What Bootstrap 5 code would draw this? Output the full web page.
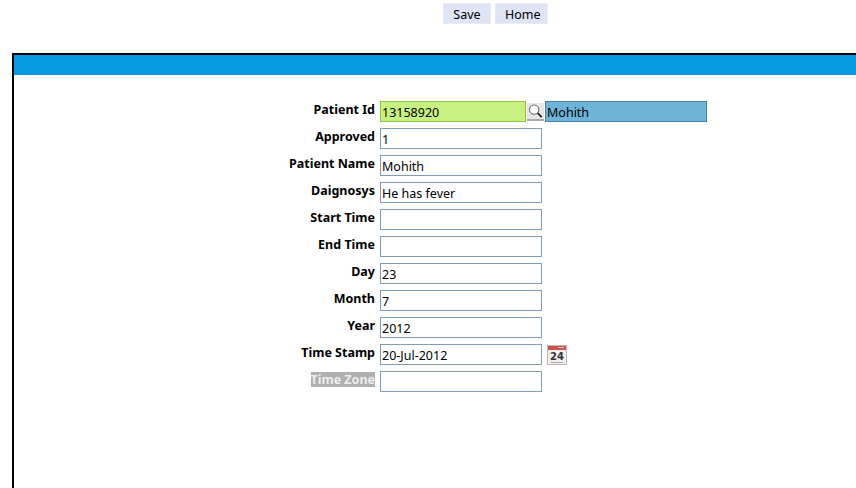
<!DOCTYPE html>
<html lang="en">

<head>
    <meta charset="UTF-8">
    <meta name="viewport" content="width=device-width, initial-scale=1">
    <title>Patient</title>
    <link href="https://cdn.jsdelivr.net/npm/bootstrap@5.3.0/dist/css/bootstrap.min.css" rel="stylesheet">
    <style>
        html, body { height: 100%; overflow: hidden; }
        body { background: #fff; color: #000; font-family: "Noto Sans", "DejaVu Sans", sans-serif; font-size: 12.5px; }
        .top-bar { height: 53px; padding: 3px 0 0 443px; gap: 4px; flex: none; }
        .top-btn { height: 21px; padding: 0 9px; background: #dfe5f5; border: 1px solid #e8ecf8; border-radius: 0; color: #000; font-size: 12.5px; line-height: 21px; }
        .save-btn { width: 48px; }
        .home-btn { width: 53px; }
        .top-btn:hover { background: #dfe5f5; }
        .main-panel { flex: 1 1 auto; margin-left: 12px; border-style: solid; border-color: #000; border-width: 2px 0 0 2px; }
        .blue-strip { height: 20px; background: #0a9ae2; }
        .form-area { padding: 26px 0 0 0; gap: 6px; }
        .form-line { height: 21px; }
        .field-label { width: 366px; padding-right: 5px; padding-bottom: 4px; text-align: right; font-weight: 700; font-size: 12.5px; line-height: 15px; white-space: nowrap; }
        .field-label span { display: inline-block; }
        .faded { background: #b0b0b0; color: #eee; }
        .field-input { width: 162px; height: 21px; padding: 1px 1px 0; border: 1px solid #7f9db9; border-radius: 0; background: #fff; color: #000; font-family: inherit; font-size: 12.5px; line-height: 16px; outline: 0; }
        .id-input { width: 146px; background: #c8f081; border-color: #8ec63f; }
        .name-input { background: #6eb4d8; border-color: #4a80a0; }
        .glass { width: 17px; height: 18px; margin: 0 1px; background: #e6e6e6; border-bottom: 2px solid #aaa; }
        .cal { margin-left: 5px; }
        .cal-day { font-family: "DejaVu Sans", sans-serif; font-size: 10px; font-weight: 700; fill: #333; }
    </style>
</head>

<body class="d-flex flex-column">

    <div class="top-bar d-flex align-items-start">
        <button type="button" class="btn top-btn save-btn">Save</button>
        <button type="button" class="btn top-btn home-btn">Home</button>
    </div>

    <div class="main-panel">
        <div class="blue-strip"></div>
        <form class="form-area d-flex flex-column">

            <div class="form-line d-flex align-items-center">
                <label class="field-label" for="patientId">Patient Id</label>
                <input type="text" id="patientId" class="field-input id-input" value="13158920">
                <svg class="glass" viewBox="0 0 17 18" aria-hidden="true">
                    <circle cx="7" cy="7.5" r="5.2" fill="#fff" stroke="#666" stroke-width="1.2"/>
                    <path d="M11 11.5 L15.5 16" stroke="#222" stroke-width="2"/>
                </svg>
                <input type="text" class="field-input name-input" value="Mohith">
            </div>

            <div class="form-line d-flex align-items-center">
                <label class="field-label" for="approved">Approved</label>
                <input type="text" id="approved" class="field-input" value="1">
            </div>

            <div class="form-line d-flex align-items-center">
                <label class="field-label" for="patientName">Patient Name</label>
                <input type="text" id="patientName" class="field-input" value="Mohith">
            </div>

            <div class="form-line d-flex align-items-center">
                <label class="field-label" for="diagnosis">Daignosys</label>
                <input type="text" id="diagnosis" class="field-input" value="He has fever">
            </div>

            <div class="form-line d-flex align-items-center">
                <label class="field-label" for="startTime">Start Time</label>
                <input type="text" id="startTime" class="field-input">
            </div>

            <div class="form-line d-flex align-items-center">
                <label class="field-label" for="endTime">End Time</label>
                <input type="text" id="endTime" class="field-input">
            </div>

            <div class="form-line d-flex align-items-center">
                <label class="field-label" for="day">Day</label>
                <input type="text" id="day" class="field-input" value="23">
            </div>

            <div class="form-line d-flex align-items-center">
                <label class="field-label" for="month">Month</label>
                <input type="text" id="month" class="field-input" value="7">
            </div>

            <div class="form-line d-flex align-items-center">
                <label class="field-label" for="year">Year</label>
                <input type="text" id="year" class="field-input" value="2012">
            </div>

            <div class="form-line d-flex align-items-center">
                <label class="field-label" for="timeStamp">Time Stamp</label>
                <input type="text" id="timeStamp" class="field-input" value="20-Jul-2012">
                <svg class="cal" width="20" height="20" viewBox="0 0 20 20" aria-hidden="true">
                    <rect x="0.5" y="0.5" width="19" height="19" fill="#efefef" stroke="#c4b4b4"/>
                    <rect x="1" y="1" width="18" height="4" fill="#c9524a"/>
                    <path d="M11 2.5 h6" stroke="#f3c8c4"/>
                    <text class="cal-day" x="10" y="14.5" text-anchor="middle">24</text>
                    <path d="M4 17.5 h12" stroke="#aaa"/>
                </svg>
            </div>

            <div class="form-line d-flex align-items-center">
                <label class="field-label" for="timeZone"><span class="faded">Time Zone</span></label>
                <input type="text" id="timeZone" class="field-input">
            </div>

        </form>
    </div>

    <script src="https://cdn.jsdelivr.net/npm/bootstrap@5.3.0/dist/js/bootstrap.bundle.min.js"></script>
</body>

</html>
